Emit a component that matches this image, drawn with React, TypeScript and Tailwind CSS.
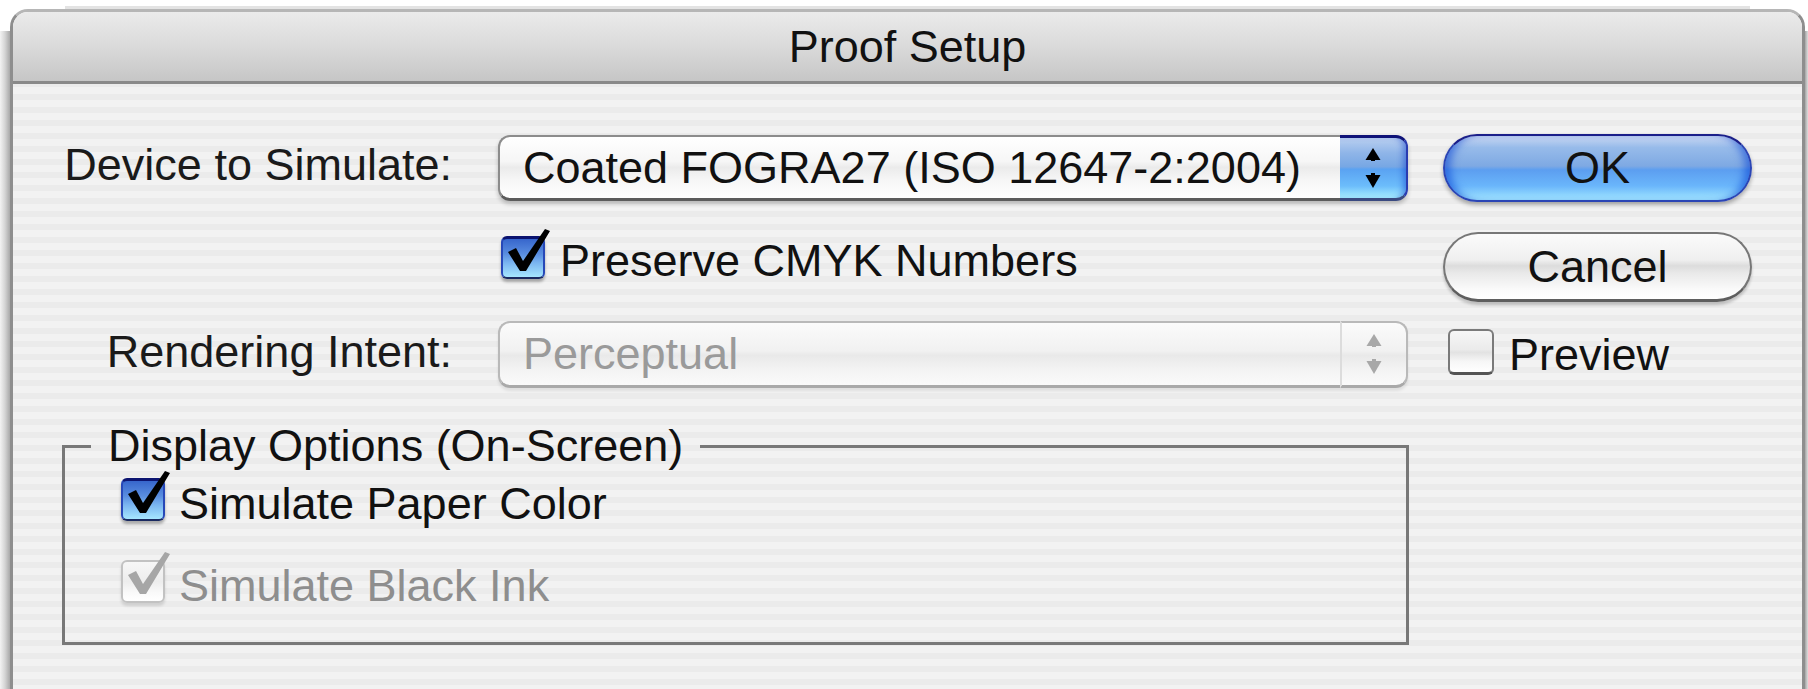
import React from "react";

const FONT = "font-['Liberation_Sans',Arial,sans-serif]";

function CheckMark({ color }: { color: string }) {
  return (
    <svg
      className="absolute left-[-2px] top-[-3px] overflow-visible"
      width="44"
      height="43"
      viewBox="0 0 44 43"
    >
      <path d="M7 16 L15 12 L22 25 L44 -7 L49 -5 L25 35 L19 35 Z" fill={color} />
    </svg>
  );
}

function CheckedBox() {
  return (
    <div className="relative w-[44px] h-[43px] shrink-0 rounded-[6px] border-2 border-[#2748b8] border-t-[3px] border-t-[#0c1470] border-b-[#1a2a60] bg-[linear-gradient(to_bottom,#3766cc_0%,#5a8ee0_40%,#79b4f0_62%,#a6e6ff_100%)] shadow-[0_3px_3px_rgba(0,0,0,0.3)]">
      <CheckMark color="#000" />
    </div>
  );
}

function DisabledCheckedBox() {
  return (
    <div className="relative w-[44px] h-[43px] shrink-0 rounded-[6px] border-2 border-[#c2c2c2] bg-[linear-gradient(to_bottom,#f7f7f7_0%,#ededed_50%,#fafafa_80%,#ffffff_100%)] shadow-[0_3px_3px_rgba(0,0,0,0.12)]">
      <CheckMark color="#a6a6a6" />
    </div>
  );
}

function EmptyBox() {
  return (
    <div className="w-[46px] h-[46px] shrink-0 rounded-[6px] border-2 border-[#7a7a7a] border-b-[3px] border-b-[#555] bg-[linear-gradient(to_bottom,#f6f6f6_0%,#ebebeb_45%,#e2e2e2_52%,#f7f7f7_75%,#ffffff_100%)]" />
  );
}

function Arrows({ color }: { color: string }) {
  return (
    <svg width="16" height="40" viewBox="0 0 16 40">
      <path d="M8 0 L15.5 12 L0.5 12 Z" fill={color} />
      <rect x="6" y="11" width="4" height="2" fill={color} />
      <rect x="6" y="25" width="4" height="3" fill={color} />
      <path d="M0.5 27 L15.5 27 L8 40 Z" fill={color} />
    </svg>
  );
}

function PopUp({ value, disabled }: { value: string; disabled?: boolean }) {
  if (disabled) {
    return (
      <div className="flex w-[910px] h-[67px] shadow-[0_3px_3px_rgba(0,0,0,0.08)] rounded-[12px]">
        <div className="flex-1 flex items-center pl-[23px] rounded-l-[12px] border-2 border-r-0 border-[#b9b9b9] border-b-[3px] border-b-[#a9a9a9] bg-[linear-gradient(to_bottom,#fbfbfb_0%,#f1f1f1_45%,#e9e9e9_52%,#f3f3f3_75%,#fafafa_100%)] text-[#9a9a9a]">
          {value}
        </div>
        <div className="w-[68px] flex items-center justify-center rounded-r-[12px] border-2 border-l-[2px] border-[#b9b9b9] border-l-[#dcdcdc] border-b-[3px] border-b-[#a9a9a9] bg-[linear-gradient(to_bottom,#fbfbfb_0%,#f1f1f1_45%,#e9e9e9_52%,#f3f3f3_75%,#fafafa_100%)]">
          <Arrows color="#a8a8a8" />
        </div>
      </div>
    );
  }
  return (
    <div className="flex w-[910px] h-[66px] shadow-[0_3px_4px_rgba(0,0,0,0.22)] rounded-[12px]">
      <div className="flex-1 flex items-center pl-[23px] rounded-l-[12px] border-2 border-r-0 border-[#8c8c8c] border-b-[3px] border-b-[#5c5c5c] bg-[linear-gradient(to_bottom,#ffffff_0%,#f6f6f6_40%,#ebebeb_50%,#f6f6f6_70%,#ffffff_100%)] text-[#111]">
        {value}
      </div>
      <div className="w-[68px] flex items-center justify-center rounded-r-[12px] border-t-[3px] border-t-[#0e1278] border-r-2 border-r-[#2a3cb0] border-b-[3px] border-b-[#3a4a80] bg-[linear-gradient(to_bottom,#b9cff0_0%,#8fb5e8_25%,#77a7e4_48%,#5aa2f2_52%,#6cbdfb_80%,#a8efff_100%)] shadow-[inset_-6px_0_6px_-3px_rgba(0,50,200,0.45)]">
        <Arrows color="#000" />
      </div>
    </div>
  );
}

export default function App() {
  return (
    <div className={`w-[1808px] h-[689px] overflow-hidden bg-white ${FONT} text-[45px] leading-[52px] text-[#111]`}>
      {/* sliver of a window behind the sheet */}
      <div className="h-[9px] pt-[6px] pl-[65px] pr-[58px]">
        <div className="h-[3px] bg-[#e3e3e3]" />
      </div>

      <div className="flex h-[680px]">
        <div className="w-[10px] mt-[22px] bg-[linear-gradient(to_right,#f3f3f3,#d4d4d4_50%,#a8a8a8)]" />

        <div className="flex-1 flex flex-col rounded-t-[18px] border-x-[3px] border-t-[3px] border-x-[#8e8e8e] border-t-[#b6b6b6] overflow-hidden">
          {/* title bar */}
          <div className="h-[72px] shrink-0 flex items-center justify-center border-b-[3px] border-b-[#898989] bg-[linear-gradient(to_bottom,#ebebeb,#dadada_50%,#c6c6c6)] text-[#111]">
            Proof Setup
          </div>

          {/* sheet body */}
          <div className="flex-1 bg-[repeating-linear-gradient(to_bottom,#ebebeb_0px,#ebebeb_3px,#f2f2f2_3px,#f2f2f2_10px,#ebebeb_10px,#ebebeb_13px)]">
            {/* device row */}
            <div className="mt-[50px] flex items-center h-[68px]">
              <div className="w-[439px] text-right mb-[6px] text-[#1a1a1a]">Device to Simulate:</div>
              <div className="ml-[46px]">
                <PopUp value="Coated FOGRA27 (ISO 12647-2:2004)" />
              </div>
              <button className="ml-[35px] w-[309px] h-[68px] rounded-full border-2 border-[#2b45b5] border-t-[#1b1f8a] bg-[linear-gradient(to_bottom,#c9d7f2_0%,#97bbea_18%,#7ea9e3_47%,#5c9ef0_53%,#6ab6fb_78%,#a2e6ff_100%)] shadow-[inset_10px_0_8px_-5px_rgba(0,60,210,0.55),inset_-10px_0_8px_-5px_rgba(0,60,210,0.55),0_3px_4px_rgba(0,0,0,0.3)] text-[#111]">
                OK
              </button>
            </div>

            {/* preserve numbers row */}
            <div className="mt-[30px] flex h-[70px]">
              <div className="w-[1395px] flex items-start pl-[488px] pt-[4px]">
                <CheckedBox />
                <span className="ml-[15px] -mt-[1px]">Preserve CMYK Numbers</span>
              </div>
              <button className="ml-[35px] w-[309px] h-[70px] rounded-full border-2 border-[#777] border-b-[3px] border-b-[#5e5e5e] bg-[linear-gradient(to_bottom,#fbfbfb_0%,#efefef_40%,#dcdcdc_49%,#e9e9e9_60%,#fafafa_85%,#ffffff_100%)] shadow-[0_3px_3px_rgba(0,0,0,0.2)] text-[#111]">
                Cancel
              </button>
            </div>

            {/* rendering intent row */}
            <div className="mt-[19px] flex items-center h-[67px]">
              <div className="w-[439px] text-right mb-[6px] text-[#1a1a1a]">Rendering Intent:</div>
              <div className="ml-[46px]">
                <PopUp value="Perceptual" disabled />
              </div>
              <div className="ml-[40px] flex items-start">
                <EmptyBox />
                <span className="ml-[15px]">Preview</span>
              </div>
            </div>

            {/* display options group */}
            <fieldset className="mt-[32px] ml-[49px] w-[1347px] h-[225px] border-[3px] border-solid border-[#787878]">
              <legend className="ml-[26px] px-[17px] text-[#111]">Display Options (On-Screen)</legend>
              <div className="mt-[6px] ml-[56px] flex items-start">
                <CheckedBox />
                <span className="ml-[14px]">Simulate Paper Color</span>
              </div>
              <div className="mt-[30px] ml-[56px] flex items-start">
                <DisabledCheckedBox />
                <span className="ml-[14px] text-[#8e8e8e]">Simulate Black Ink</span>
              </div>
            </fieldset>
          </div>
        </div>

        <div className="w-[3px] mt-[22px] bg-[linear-gradient(to_right,#a4a4a4,#dedede)]" />
      </div>
    </div>
  );
}
